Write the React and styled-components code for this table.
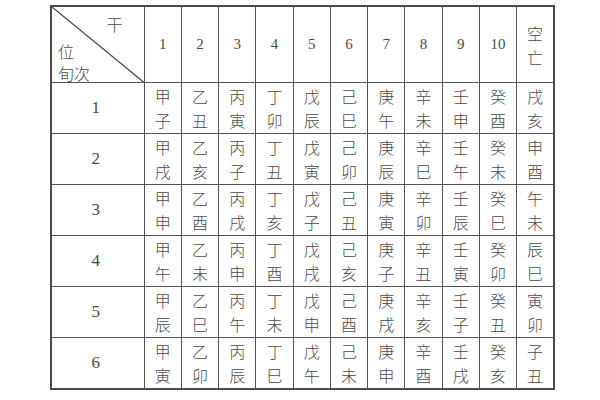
import styled, { createGlobalStyle } from "styled-components";

const GlobalStyle = createGlobalStyle`
  html, body {
    margin: 0;
    padding: 0;
    background: #ffffff;
  }
  body {
    font-family: "Liberation Serif", "Noto Sans CJK SC", serif;
    color: #4a4a4a;
  }
`;

const rows = [
  ["甲子", "乙丑", "丙寅", "丁卯", "戊辰", "己巳", "庚午", "辛未", "壬申", "癸酉", "戌亥"],
  ["甲戌", "乙亥", "丙子", "丁丑", "戊寅", "己卯", "庚辰", "辛巳", "壬午", "癸未", "申酉"],
  ["甲申", "乙酉", "丙戌", "丁亥", "戊子", "己丑", "庚寅", "辛卯", "壬辰", "癸巳", "午未"],
  ["甲午", "乙未", "丙申", "丁酉", "戊戌", "己亥", "庚子", "辛丑", "壬寅", "癸卯", "辰巳"],
  ["甲辰", "乙巳", "丙午", "丁未", "戊申", "己酉", "庚戌", "辛亥", "壬子", "癸丑", "寅卯"],
  ["甲寅", "乙卯", "丙辰", "丁巳", "戊午", "己未", "庚申", "辛酉", "壬戌", "癸亥", "子丑"],
];

export default function App() {
  return (
    <Page>
      <GlobalStyle />
      <Table>
        <colgroup>
          <col style={{ width: 93 }} />
          {Array.from({ length: 11 }).map((_, i) => (
            <col key={i} style={{ width: 37.27 }} />
          ))}
        </colgroup>
        <thead>
          <tr>
            <Corner>
              <Diagonal viewBox="0 0 100 100" preserveAspectRatio="none">
                <line
                  x1="0"
                  y1="0"
                  x2="100"
                  y2="100"
                  stroke="#4a4a4a"
                  strokeWidth="1.3"
                  vectorEffect="non-scaling-stroke"
                />
              </Diagonal>
              <CornerTop>干</CornerTop>
              <CornerLeft>位</CornerLeft>
              <CornerBottom>旬次</CornerBottom>
            </Corner>
            {Array.from({ length: 10 }).map((_, i) => (
              <HeadCell key={i}>{i + 1}</HeadCell>
            ))}
            <HeadCell>
              <Stack>
                <span>空</span>
                <span>亡</span>
              </Stack>
            </HeadCell>
          </tr>
        </thead>
        <tbody>
          {rows.map((row, r) => (
            <tr key={r}>
              <RowLabel>{r + 1}</RowLabel>
              {row.map((pair, c) => (
                <Cell key={c}>
                  <Stack>
                    <span>{pair[0]}</span>
                    <span>{pair[1]}</span>
                  </Stack>
                </Cell>
              ))}
            </tr>
          ))}
        </tbody>
      </Table>
    </Page>
  );
}

const Page = styled.div`
  width: 600px;
  height: 400px;
  padding: 5px 0 0 50px;
  box-sizing: border-box;
`;

const Table = styled.table`
  border-collapse: collapse;
  table-layout: fixed;
  width: 503px;
  border: 2px solid #4a4a4a;
`;

const BaseCell = styled.td`
  border: 1px solid #555555;
  padding: 0;
  text-align: center;
  vertical-align: middle;
  color: #4a4a4a;
`;

const HeadCell = styled(BaseCell).attrs({ as: "th" })`
  height: 75px;
  font-weight: normal;
  font-size: 15px;
`;

const Corner = styled(HeadCell)`
  position: relative;
  text-align: left;
`;

const Diagonal = styled.svg`
  position: absolute;
  inset: 0;
  width: 100%;
  height: 100%;
`;

const CornerText = styled.span`
  position: absolute;
  font-size: 16px;
  line-height: 1;
  font-family: "Noto Sans CJK SC", sans-serif;
  font-weight: 300;
`;

const CornerTop = styled(CornerText)`
  top: 9px;
  right: 21px;
`;

const CornerLeft = styled(CornerText)`
  top: 36px;
  left: 6px;
`;

const CornerBottom = styled(CornerText)`
  top: 58px;
  left: 6px;
`;

const RowLabel = styled(BaseCell)`
  height: 50px;
  font-size: 17px;
  padding-right: 4px;
`;

const Cell = styled(BaseCell)`
  height: 50px;
`;

const Stack = styled.div`
  display: flex;
  flex-direction: column;
  align-items: center;
  font-family: "Noto Sans CJK SC", sans-serif;
  font-weight: 300;
  font-size: 16px;
  line-height: 24px;
`;
